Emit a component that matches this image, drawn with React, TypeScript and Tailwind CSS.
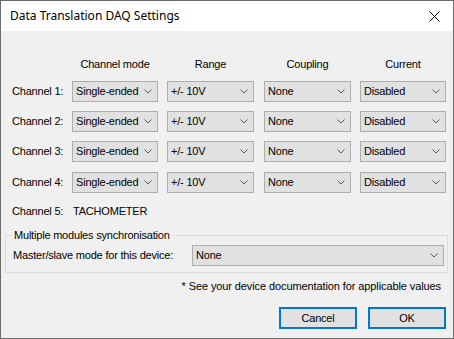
import React from "react";

const channels = [
  { label: "Channel 1:", rowClass: "" },
  { label: "Channel 2:", rowClass: "mt-[9px]" },
  { label: "Channel 3:", rowClass: "mt-[9px]" },
  { label: "Channel 4:", rowClass: "mt-[10px]" },
];

// column widths / gaps follow the combos in the dialog
const columns = [
  { title: "Channel mode", value: "Single-ended", className: "w-[86px]" },
  { title: "Range", value: "+/- 10V", className: "ml-[9px] w-[87px]" },
  { title: "Coupling", value: "None", className: "ml-[10px] w-[87px]" },
  { title: "Current", value: "Disabled", className: "ml-[9px] w-[86px]" },
];

function Chevron() {
  return (
    <svg width="8" height="5" viewBox="0 0 8 5" className="shrink-0">
      <polyline points="0.5,0.5 4,4 7.5,0.5" fill="none" stroke="#5a5a5a" strokeWidth="1" />
    </svg>
  );
}

function Combo({ value, className }: { value: string; className?: string }) {
  return (
    <div
      className={`flex h-[21px] items-center justify-between border border-[#adadad] bg-[#e1e1e1] pl-[3px] pr-[5px] ${className ?? ""}`}
    >
      <span className="leading-[13px]">{value}</span>
      <Chevron />
    </div>
  );
}

function DialogButton({ children }: { children: React.ReactNode }) {
  return (
    <button className="flex h-[22px] w-[78px] items-center justify-center border-2 border-[#0078d7] bg-[#e1e1e1] leading-[13px] text-black">
      {children}
    </button>
  );
}

export default function App() {
  return (
    <div className="flex h-[339px] w-[454px] flex-col border border-[#6b6b6b] bg-[#f0f0f0] font-['Liberation_Sans',Arial,sans-serif] text-[11px] tracking-[-0.2px] text-black">
      {/* title bar */}
      <div className="flex h-[30px] shrink-0 items-center justify-between bg-white pl-[9px] pr-[9px]">
        <span className="font-['Noto_Sans',sans-serif] text-[12px] leading-[16px] tracking-normal">
          Data Translation DAQ Settings
        </span>
        <svg width="11" height="11" viewBox="0 0 11 11" className="mr-[4px]">
          <path d="M0.5 0.5 L10.5 10.5 M10.5 0.5 L0.5 10.5" stroke="#000" strokeWidth="1" />
        </svg>
      </div>

      {/* column headers */}
      <div className="mt-[27px] flex h-[13px] pl-[71px] leading-[13px]">
        {columns.map((col) => (
          <div key={col.title} className={`text-center ${col.className}`}>
            {col.title}
          </div>
        ))}
      </div>

      {/* channel rows */}
      <div className="mt-[10px] flex flex-col">
        {channels.map((ch) => (
          <div key={ch.label} className={`flex items-center pl-[11px] ${ch.rowClass}`}>
            <span className="w-[60px] leading-[13px]">{ch.label}</span>
            {columns.map((col) => (
              <Combo key={col.title} value={col.value} className={col.className} />
            ))}
          </div>
        ))}
      </div>

      <div className="mt-[12px] flex h-[13px] pl-[11px] leading-[13px]">
        <span className="w-[61px]">Channel 5:</span>
        <span>TACHOMETER</span>
      </div>

      {/* sync group */}
      <fieldset className="mx-[4px] mt-[11px] mr-[5px] border border-[#dcdcdc] pb-[6px]">
        <legend className="ml-[6px] px-[2px] leading-[13px]">Multiple modules synchronisation</legend>
        <div className="mt-[3px] flex items-center pl-[7px] pr-[3px]">
          <span className="w-[179px] leading-[13px]">Master/slave mode for this device:</span>
          <Combo value="None" className="flex-1" />
        </div>
      </fieldset>

      <div className="mt-[7px] pr-[12px] text-right leading-[13px] tracking-[-0.1px]">
        * See your device documentation for applicable values
      </div>

      <div className="mt-[14px] flex justify-end gap-[11px] pr-[7px]">
        <DialogButton>Cancel</DialogButton>
        <DialogButton>OK</DialogButton>
      </div>
    </div>
  );
}
